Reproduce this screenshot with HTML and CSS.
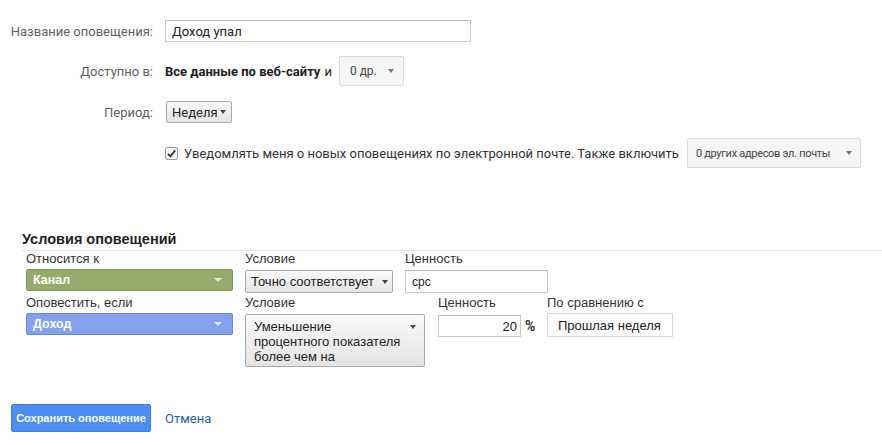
FILE: index.html
```html
<!DOCTYPE html>
<html lang="ru">
<head>
<meta charset="utf-8">
<link rel="stylesheet" href="styles.css">
</head>
<body>
<div class="page">
  <div class="form">
    <div class="row row-name">
      <div class="label">Название оповещения:</div>
      <div class="field"><div class="text-input name-input">Доход упал</div></div>
    </div>
    <div class="row row-avail">
      <div class="label">Доступно в:</div>
      <div class="field">
        <b class="strong">Все данные по веб-сайту</b><span class="and">и</span>
        <div class="flat-btn avail-btn"><span>0 др.</span><span class="caret grey"></span></div>
      </div>
    </div>
    <div class="row row-period">
      <div class="label">Период:</div>
      <div class="field">
        <div class="grad-btn period-btn"><span>Неделя</span><span class="caret dark"></span></div>
      </div>
    </div>
    <div class="row row-mail">
      <div class="label"></div>
      <div class="field">
        <span class="check"><svg viewBox="0 0 13 13" width="13" height="13"><rect x="0.5" y="0.5" width="12" height="12" rx="1.5" fill="#f4f4f4" stroke="#9a9a9a"/><path d="M3 6.8 L5.4 9.3 L10.2 3.4" fill="none" stroke="#333" stroke-width="1.8"/></svg></span>
        <span class="mail-text">Уведомлять меня о новых оповещениях по электронной почте. Также включить</span>
        <div class="flat-btn mail-btn"><span>0 других адресов эл. почты</span><span class="caret grey"></span></div>
      </div>
    </div>
  </div>

  <div class="conditions">
    <h2 class="cond-title">Условия оповещений</h2>
    <div class="cond-body">
      <div class="cond-row row-a">
        <div class="col col-1">
          <div class="col-label">Относится к</div>
          <div class="color-select green"><span>Канал</span><span class="caret light"></span></div>
        </div>
        <div class="col col-2a">
          <div class="col-label">Условие</div>
          <div class="grad-btn cond-select"><span>Точно соответствует</span><span class="caret dark"></span></div>
        </div>
        <div class="col col-3a">
          <div class="col-label">Ценность</div>
          <div class="text-input cpc-input">cpc</div>
        </div>
      </div>
      <div class="cond-row row-b">
        <div class="col col-1">
          <div class="col-label">Оповестить, если</div>
          <div class="color-select blue"><span>Доход</span><span class="caret light"></span></div>
        </div>
        <div class="col col-2b">
          <div class="col-label">Условие</div>
          <div class="grad-btn multi-select"><span>Уменьшение процентного показателя более чем на</span><span class="caret dark"></span></div>
        </div>
        <div class="col col-3b">
          <div class="col-label">Ценность</div>
          <div class="pct"><div class="text-input pct-input">20</div><span class="pct-sign">%</span></div>
        </div>
        <div class="col col-4b">
          <div class="col-label">По сравнению с</div>
          <div class="compare-box">Прошлая неделя</div>
        </div>
      </div>
    </div>
  </div>

  <div class="actions">
    <div class="save-btn">Сохранить оповещение</div>
    <span class="cancel">Отмена</span>
  </div>
</div>
</body>
</html>
```
FILE: styles.css
```css
* { box-sizing: border-box; }
html, body { margin: 0; padding: 0; background: #fff; }
body { font-family: Roboto, "Liberation Sans", Arial, sans-serif; color: #222; width: 882px; height: 445px; overflow: hidden; }

.page { padding-top: 20px; }

.form { display: flex; flex-direction: column; }
.row { display: flex; align-items: center; }
.label { width: 165px; padding-right: 12px; text-align: right; font-size: 13px; color: #5f5f5f; flex: none; }
.field { display: flex; align-items: center; }

.row-name { height: 22px; }
.row-avail { height: 30px; margin-top: 14px; }
.row-period { height: 22px; margin-top: 15px; }
.row-mail { height: 30px; margin-top: 15px; }

.text-input { border: 1px solid #c9c9c9; border-top-color: #b5b5b5; background: #fff; font-size: 13px; display: flex; align-items: center; color: #222; }
.name-input { width: 306px; height: 22px; padding-left: 6px; }

.strong { font-weight: 700; font-size: 13px; color: #222; }
.and { font-size: 13px; margin-left: 4px; margin-right: 7px; color: #222; }

.flat-btn { display: flex; align-items: center; justify-content: space-between; background: #f6f6f6; border: 1px solid #dcdcdc; border-radius: 2px; font-size: 11px; color: #444; }
.avail-btn { width: 65px; height: 30px; padding: 0 9px 0 10px; font-size: 12px; }
.mail-btn { width: 174px; height: 30px; padding: 0 8px 0 8px; font-size: 11px; letter-spacing: -0.3px; margin-left: 8px; }

.grad-btn { display: flex; justify-content: space-between; background: linear-gradient(#fafafa, #e4e4e4); border: 1px solid #a9a9a9; border-radius: 2px; font-size: 13px; color: #222; }
.period-btn { width: 66px; height: 22px; align-items: center; padding: 0 5px 0 5px; margin-left: 1px; }

.caret { width: 0; height: 0; border-left: 3.5px solid transparent; border-right: 3.5px solid transparent; border-top: 4px solid #555; flex: none; }
.caret.grey { border-top-color: #777; }
.caret.dark { border-top-color: #444; }
.caret.light { border-top-color: rgba(255,255,255,0.75); border-left-width: 4px; border-right-width: 4px; border-top-width: 4px; }

.check { width: 13px; height: 13px; display: inline-flex; margin-left: 0; margin-right: 6px; }
.check svg { display: block; }
.mail-text { font-size: 13px; color: #333; }

.conditions { margin-top: 61px; font-family: "Liberation Sans", Arial, sans-serif; }
.cond-title { margin: 0 0 0 22px; font-size: 14.5px; font-weight: 700; color: #222; height: 21px; line-height: 20px; }
.cond-body { border-top: 1px solid #e3e3e3; margin-left: 22px; padding-left: 4px; }

.cond-row { display: flex; align-items: flex-start; }
.row-a { margin-top: 0; }
.row-b { margin-top: 2px; }
.col { display: flex; flex-direction: column; }
.col-label { font-size: 13px; color: #333; height: 16px; line-height: 15px; margin-bottom: 2px; }

.col-1 { width: 207px; margin-right: 12px; }
.col-2a { width: 148px; margin-right: 12px; }
.col-3a { width: 143px; }
.col-2b { width: 180px; margin-right: 13px; }
.col-3b { width: 99px; margin-right: 10px; }
.col-4b { width: 126px; }

.color-select { height: 22px; border-radius: 2px; display: flex; align-items: center; justify-content: space-between; padding: 0 10px 0 6px; color: #fff; font-weight: 700; font-size: 12.5px; }
.color-select.green { background: #93ab6b; border: 1px solid #7d9658; }
.color-select.blue { background: #84a1ee; border: 1px solid #6b88d6; }

.cond-select { height: 23px; align-items: center; padding: 0 4px 0 5px; margin-top: 1px; }
.cpc-input { height: 23px; padding-left: 6px; margin-top: 1px; font-size: 12px; }

.multi-select { height: 53px; align-items: flex-start; padding: 4px 8px 0 8px; line-height: 15px; margin-top: 1px; }
.multi-select span:first-child { width: 150px; }
.multi-select .caret { margin-top: 6px; }

.pct { display: flex; align-items: center; margin-top: 2px; }
.pct-input { width: 83px; height: 22px; justify-content: flex-end; padding-right: 3px; }
.pct-sign { font-size: 14px; margin-left: 4px; color: #333; font-weight: 700; font-family: Roboto, sans-serif; }

.compare-box { height: 24px; border: 1px solid #d6d6d6; display: flex; align-items: center; padding-left: 10px; font-size: 13px; color: #222; }

.actions { display: flex; align-items: center; margin-top: 37px; padding-left: 11px; font-family: "Liberation Sans", Arial, sans-serif; }
.save-btn { width: 140px; height: 28px; background: #4d8ef0; border: 1px solid #3f7fe0; border-radius: 2px; color: #fff; font-weight: 700; font-size: 11px; display: flex; align-items: center; justify-content: center; }
.cancel { margin-left: 14px; font-size: 13px; color: #2a5db0; font-family: Roboto, sans-serif; }
```
